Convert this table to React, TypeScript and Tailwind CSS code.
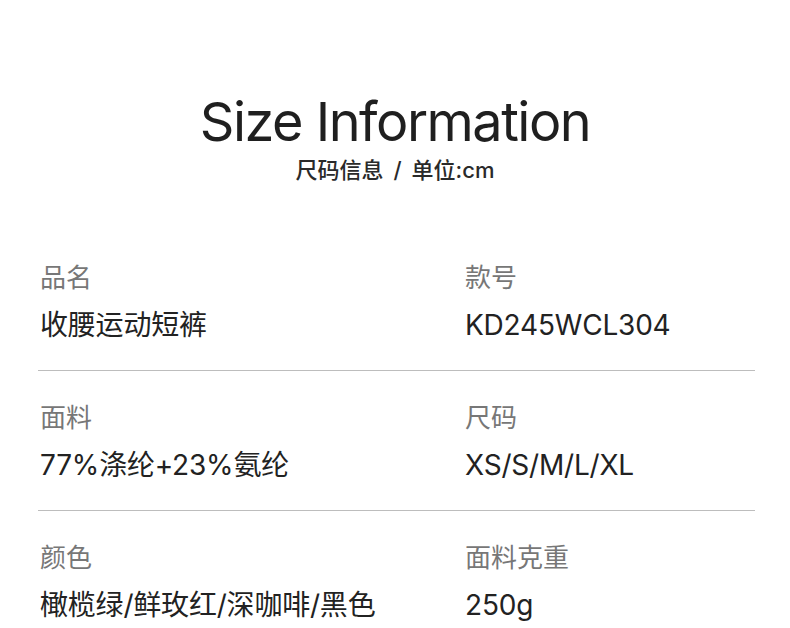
const rows = [
  [
    { label: '品名', value: '收腰运动短裤' },
    { label: '款号', value: 'KD245WCL304' },
  ],
  [
    { label: '面料', value: '77%涤纶+23%氨纶' },
    { label: '尺码', value: 'XS/S/M/L/XL' },
  ],
  [
    { label: '颜色', value: '橄榄绿/鲜玫红/深咖啡/黑色' },
    { label: '面料克重', value: '250g' },
  ],
];

export default function App() {
  return (
    <div className="w-[790px] h-[628px] overflow-hidden bg-white text-[#222] font-['Inter','Noto_Sans_CJK_SC',sans-serif]">
      <div className="pt-[92px] flex flex-col items-center">
        <h1 className="text-[54px] leading-[60px] font-normal tracking-[-1.5px] text-[#1f1f1f]">Size Information</h1>
        <p className="mt-[4px] text-[22px] leading-[28px] font-medium text-[#2a2a2a]">
          尺码信息<span className="mx-[10px]">/</span>单位:cm
        </p>
      </div>
      <div className="mt-[76px] mx-[38px] w-[717px]">
        {rows.map((row, i) => (
          <div
            key={i}
            className={`grid grid-cols-[425px_1fr] ${i === 0 ? 'pt-0' : 'pt-[29px]'} ${i < rows.length - 1 ? 'pb-[27px] border-b border-[#bdbdbd]' : ''}`}
          >
            {row.map((cell) => (
              <div key={cell.label} className="pl-[2px]">
                <div className="text-[26px] leading-[36px] text-[#777]">{cell.label}</div>
                <div className="mt-[11px] text-[28px] leading-[36px] tracking-[-0.2px] text-[#222]">{cell.value}</div>
              </div>
            ))}
          </div>
        ))}
      </div>
    </div>
  );
}
